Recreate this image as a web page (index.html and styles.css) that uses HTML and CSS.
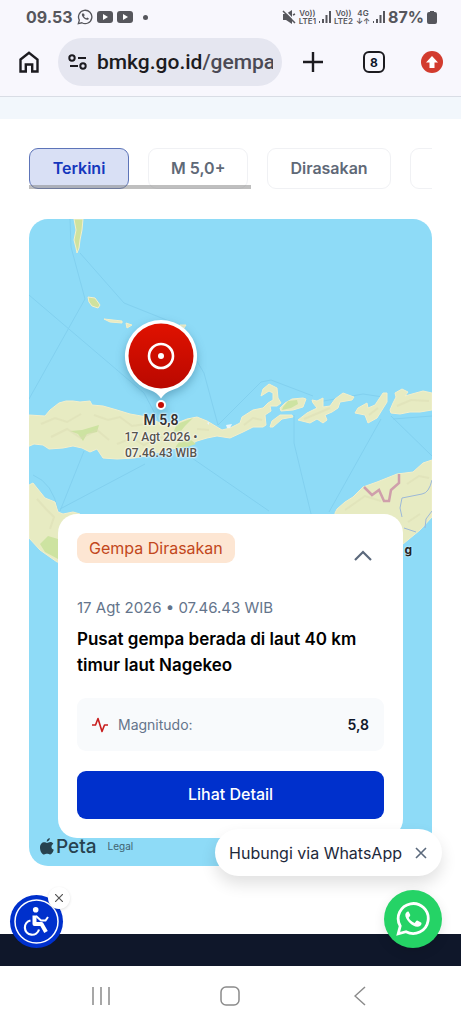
FILE: index.html
```html
<!DOCTYPE html>
<html lang="id">
<head>
  <meta charset="UTF-8">
  <title>Gempa Bumi Terkini</title>
  <meta name="viewport" content="width=device-width, initial-scale=1">
  <link rel="stylesheet" href="styles.css">
</head>
<body>
  <!-- Bilah status -->
  <div class="status-bar">
    <span class="clock">09.53</span>
    <svg class="icon-chat" width="16" height="16" viewBox="0 0 24 24" fill="none" stroke="#56565c" stroke-width="2">
      <path d="M2 22l1.500-5.300A10 10 0 1 1 7.300 20.600z"/>
      <path d="M8.500 6.500c-2 1-1.500 3.500.5 6s5 4.500 7.500 3.500c1.500-.8 1.300-2 .8-2.300l-2-1-1.300 1.300c-1.500-.5-2.800-1.800-3.500-3.200l1-1.300-.9-2.200z" fill="#56565c" stroke="none"/>
    </svg>
    <svg width="16" height="12" viewBox="0 0 16 12"><rect width="16" height="12" rx="3" fill="#56565c"/><path d="M6 3l5 3-5 3z" fill="#fff"/></svg>
    <svg width="16" height="12" viewBox="0 0 16 12"><rect width="16" height="12" rx="3" fill="#56565c"/><path d="M6 3l5 3-5 3z" fill="#fff"/></svg>
    <span class="dot"></span>
    <div class="status-right">
      <svg width="14" height="14" viewBox="0 0 14 14"><path d="M1 4h3L10 0v14L4 10H1z" fill="#56565c"/><path d="M2 0l12 12" stroke="#f8f7fd" stroke-width="1.500"/><path d="M1 1l12 12M11 5l2-1" stroke="#56565c" stroke-width="1.500"/></svg>
      <span class="net">Vo))<br>LTE1</span>
      <svg width="12" height="12" viewBox="0 0 12 12" fill="#56565c"><path d="M0 10h1v2H0zM3 8h2v4H3zM6.500 4h2v8h-2zM10 0h2v12h-2z"/></svg>
      <span class="net">Vo))<br>LTE2</span>
      <span class="net">4G<br>↓↑</span>
      <svg width="12" height="12" viewBox="0 0 12 12" fill="#56565c"><path d="M0 10h1v2H0zM3 8h2v4H3zM6.500 4h2v8h-2zM10 0h2v12h-2z"/></svg>
      <span class="battery">87%</span>
      <svg width="10" height="13" viewBox="0 0 10 13" fill="#56565c"><path d="M3 0h4v1h1a2 2 0 0 1 2 2v8a2 2 0 0 1-2 2H2a2 2 0 0 1-2-2V3a2 2 0 0 1 2-2h1z"/></svg>
    </div>
  </div>

  <!-- Bilah peramban -->
  <header class="browser-bar">
    <button class="icon-btn" aria-label="Beranda">
      <svg width="20" height="22" viewBox="0 0 20 22" fill="none" stroke="#1c1b20" stroke-width="2.400"><path d="M1.500 8.500L10 1.800l8.500 6.700v12h-5.300v-7H6.800v7H1.500z"/></svg>
    </button>
    <button class="address">
      <svg width="20" height="16" viewBox="0 0 20 16" fill="none" stroke="#1c1b20" stroke-width="2"><circle cx="4" cy="4" r="2.700"/><path d="M10 4h8M2 12h8"/><circle cx="15" cy="12" r="2.700"/></svg>
      <span class="url">bmkg.go.id<span class="path">/gempa</span></span>
    </button>
    <button class="icon-btn plus" aria-label="Tab baru">
      <svg width="20" height="20" viewBox="0 0 20 20" stroke="#1c1b20" stroke-width="2.400"><path d="M10 0v20M0 10h20"/></svg>
    </button>
    <button class="tab-count">8</button>
    <button class="update" aria-label="Perbarui">
      <svg width="12" height="12" viewBox="0 0 12 12" fill="#fff"><path d="M6 0l6 6.500H8.500V12h-5V6.500H0z"/></svg>
    </button>
  </header>
  <div class="strip"></div>

  <main class="content">
    <div class="tabs">
      <button class="tab active">Terkini</button>
      <button class="tab">M 5,0+</button>
      <button class="tab">Dirasakan</button>
      <button class="tab" aria-label="Lainnya"></button>
    </div>

    <section class="map">
      <svg class="map-base" viewBox="0 0 403 647" preserveAspectRatio="xMinYMin slice">
        <rect width="403" height="647" fill="#8edbf7"/>
        <!-- Garis batas laut -->
        <g fill="none" stroke="#82d0ef" stroke-width="1">
          <path d="M41 0l1 28 14 52L0 180M51 34l44 50 50 20 30 50 14 52M0 76l115 98 16 30"/>
          <path d="M189 206l43-43 10-2 42 16M265 196v28l18 75M352 200l-52 93M362 197l41 40M364 200l39-3M31 292l24-60M31 290l85-45M160 237l80 55M4 256q20 8 25 36M289 183l45-8 20 3"/>
        </g>
        <g fill="#e7ebc2" stroke="#f3efcb" stroke-width="1" stroke-linejoin="round">
          <path d="M45 0h9l-1 11-2 10-1 8-2 5-1-5-2-8 2-10z" fill="#cfe29e"/>
          <path d="M59 78l7 1 5 7-2 3-6-2-3-4z" fill="#cfe29e"/>
          <path d="M75 100l18 2v2l-12-1zM97 104l6 2-5 3zM151 106h6l-2 3z"/>
          <path d="M0 196l16 1 5-6 9-7 7-2 7 0 7 1 10-1 2 4 11 1 14 4 13 4 17 3 13 6h17l10-4 10-2 10 4 10 6 5 3 8-2 10-5 2-6 11-7 10-2 5-5 5-3v-7l-4-2-8 5 2-7 6-5 8 4 1 10 3 5-4 3h-7l1 5-6 4 1 10-3 2h-10l-10 5-13 6-13-2-10 2-10 3-10 5-10 2-14 3-13 4-16 3-17 1-14-1-6-9-7 3-8-4-9-2-10 2-14 1-6-4-9-1-9 4z"/>
          <path d="M251 189l5-5 7-4 11-1 3 1-3 8-10 3-12 1zM241 208l2-6 8-6h12l1 2-11 2-9 8z"/>
          <path d="M269 201l9-7 10-5-4-5-1-3 5 1 6-3v9l7-1 5-7 8-6 11 4-2 3-12 2-2 6-6 4-7 3 2 5-4 3-6-4-7 4z"/>
          <path d="M326 194l3-5 9-5 1 5 7-3 8-12h4v9l-10 16-9 5-3-8z"/>
          <path d="M361 191l3-7 3-6-1-4 7-4 6 3-3 4 7-2 11-3 9 2v17l-12 2h-10l-10 2-9-1z"/>
          <path d="M306 294l2-4 8-7 8-5 10-10 14-5 20-8 16-2 10-9 9-3v57l-12 13-17 14-68 5z"/>
          <path d="M0 266l4-2 12 15 10 4 3 10 5 2 10-2 7 2v50l-23-2-17-12-11-12z"/>
        </g>
        <g fill="#cde3a1">
          <path d="M41 212l12-1 17-5-2 7-10 2-4 7-5-7zM148 205l16-6-8 8-4 5-8 2zM150 223l12-2 5 4-9 3-12 1zM254 188l5-6 9-1 1 4-7 4-9 2zM11 325l8-8 10 3v20l-13-7z"/>
        </g>
        <!-- Relief daratan -->
        <g fill="none" stroke="#d9dab2" stroke-width="2" opacity=".4">
          <path d="M12 205l14-6 12 4 14-8M22 218l16-8 14 9 16-8 12 10M65 196l14 5 12-3 12 9 14-2M88 225l15-6 12 7 14-8 12 2M168 210l12 1M215 206l9-7 9 2M275 200l12-5 14-6M368 187l14-6 18 1M340 196l9-7M316 291l20-14 16 5M378 265l12-8 10 2M379 303l12-8M8 280l9 10 8 8-4 12"/>
        </g>
        <path d="M335 268l8 8 7-5 5 11h5l2-11 8-7v-9" fill="none" stroke="#cf9fab" stroke-width="2.500"/>
        <path d="M403 261q-3 13-10 14l-20 4-2 10 2 9M403 292l-6 8-1 9M375 309l12 4" fill="none" stroke="#9db9d8" stroke-width="1"/>
        <path d="M178 204l2-1v3zM197 206l6-1-2 4h-3z" fill="#e9f6f8"/>
      </svg>

      <div class="pin">
        <svg class="pin-icon" width="88" height="104" viewBox="0 0 88 104">
          <defs>
            <linearGradient id="pinRed" x1="0" y1="0" x2="0" y2="1"><stop offset="0" stop-color="#e01200"/><stop offset="1" stop-color="#b90800"/></linearGradient>
          </defs>
          <path d="M44 8a36 36 0 0 1 10 70.600q-6 2-10 8-4-6-10-8A36 36 0 0 1 44 8z" fill="#fff"/>
          <circle cx="44" cy="44" r="32.500" fill="url(#pinRed)"/>
          <circle cx="44" cy="44" r="12" fill="none" stroke="#fff" stroke-width="2.600"/>
          <circle cx="44" cy="44" r="3" fill="#fff"/>
          <circle cx="44" cy="93" r="4" fill="#c40d04" stroke="#fff" stroke-width="2"/>
        </svg>
        <strong>M 5,8</strong>
        <span>17 Agt 2026 •</span>
        <span>07.46.43 WIB</span>
      </div>
      <span class="place">g</span>

      <article class="card">
        <div class="card-head">
          <span class="badge">Gempa Dirasakan</span>
          <button class="toggle" aria-label="Tutup rincian">
            <svg width="18" height="11" viewBox="0 0 18 11" fill="none" stroke="#5b697c" stroke-width="2.200"><path d="M1 10l8-8 8 8"/></svg>
          </button>
        </div>
        <p class="time">17 Agt 2026 • 07.46.43 WIB</p>
        <h2>Pusat gempa berada di laut 40 km timur laut Nagekeo</h2>
        <div class="magnitude">
          <svg width="16" height="16" viewBox="0 0 16 16" fill="none" stroke="#c81e1e" stroke-width="1.600" stroke-linejoin="round"><path d="M0 8h3.500L6 1.500l4 13L12.500 8H16"/></svg>
          <span>Magnitudo:</span>
          <strong>5,8</strong>
        </div>
        <button class="detail">Lihat Detail</button>
      </article>

      <div class="attribution">
        <svg width="14" height="17" viewBox="0 0 14 17" fill="#27424f"><path d="M9.800 0c.1 2-1.300 3.600-3.100 3.700C6.500 2 8 .3 9.800 0zM7 5c.9 0 1.800-.9 3.300-.9 1.300 0 2.300.6 3 1.600-2.700 1.700-2.200 5 .5 6.100-.8 2.300-2.100 4.700-3.700 4.700-1.200 0-1.600-.7-3-.7s-1.900.7-3 .7C2.100 16.500 0 13.100 0 9.700c0-3.400 2-5.400 4.200-5.400C5.400 4.300 6.300 5 7 5z"/></svg>
        <span class="brand">Peta</span>
        <a href="#legal">Legal</a>
      </div>
    </section>
  </main>

  <footer class="site-footer"></footer>

  <!-- Navigasi sistem -->
  <nav class="system-nav">
    <button aria-label="Aplikasi terbaru"><svg width="18" height="18" viewBox="0 0 18 18" stroke="#8b8b8b" stroke-width="1.500"><path d="M1 0v18M9 0v18M17 0v18"/></svg></button>
    <button aria-label="Layar utama"><svg width="20" height="20" viewBox="0 0 20 20" fill="none" stroke="#8b8b8b" stroke-width="1.500"><rect x="1" y="1" width="18" height="18" rx="5"/></svg></button>
    <button aria-label="Kembali"><svg width="12" height="20" viewBox="0 0 12 20" fill="none" stroke="#8b8b8b" stroke-width="1.500"><path d="M11 1L1 10l10 9"/></svg></button>
  </nav>

  <!-- Tombol mengambang -->
  <div class="accessibility">
    <button class="accessibility-btn" aria-label="Aksesibilitas">
      <svg width="53" height="53" viewBox="0 0 53 53" fill="none" stroke="#fff">
        <circle cx="26.500" cy="26.500" r="21.500" stroke-width="1.500"/>
        <circle cx="25.700" cy="14.800" r="2.800" fill="#fff" stroke="none"/>
        <path d="M24.500 20.500v8.500h7l4.500 8" stroke-width="4" stroke-linejoin="round"/>
        <path d="M26 21l5 4.500h4.500l2.500-3.500" stroke-width="2"/>
        <path d="M20.500 25.500a7.200 7.200 0 1 0 8.500 9" stroke-width="2.200"/>
      </svg>
    </button>
    <button class="accessibility-close" aria-label="Sembunyikan">
      <svg width="8" height="8" viewBox="0 0 8 8" stroke="#555" stroke-width="1.200"><path d="M0 0l8 8M8 0L0 8"/></svg>
    </button>
  </div>
  <div class="wa-bubble">
    <span>Hubungi via WhatsApp</span>
    <button aria-label="Tutup"><svg width="12" height="12" viewBox="0 0 12 12" stroke="#5b697c" stroke-width="1.600"><path d="M1 1l10 10M11 1L1 11"/></svg></button>
  </div>
  <a class="wa-btn" href="#whatsapp" aria-label="WhatsApp">
    <svg width="34" height="34" viewBox="0 0 34 34" fill="none" stroke="#fff" stroke-width="2.800">
      <path d="M2.200 31.800l2-7.800A15 15 0 1 1 10 29.700z"/>
      <path d="M12.500 9.500c-1-.5-3 .8-3.200 3.300-.3 4.500 7 12 12 12 2.500 0 4.200-1.600 4.200-3.200 0-.8-.1-1-.5-1.200l-3.700-1.800c-.5-.2-.8 0-1.100.4l-1.500 1.900c-2.800-1-4.900-2.900-6-5.200l1.300-1.800c.3-.4.3-.7.200-1.100z" fill="#fff" stroke="none"/>
    </svg>
  </a>
</body>
</html>
```
FILE: styles.css
```css
* {
  box-sizing: border-box;
}
body {
  position: relative;
  display: flex;
  flex-direction: column;
  min-height: 100vh;
  margin: 0;
  background: #fff;
  color: #0f172a;
  font-family: "Inter", sans-serif;
  overflow-x: hidden;
}
button {
  padding: 0;
  border: none;
  background: none;
  color: inherit;
  font: inherit;
}
svg {
  display: block;
  flex-shrink: 0;
}

/* Bilah status */
.status-bar {
  display: flex;
  align-items: center;
  gap: 4px;
  height: 34px;
  padding: 0 24px 0 26px;
  background: #f8f7fd;
  color: #56565c;
}
.clock, .battery {
  font-size: 16px;
  font-weight: 700;
}
.dot {
  width: 5px;
  height: 5px;
  margin-left: 6px;
  border-radius: 50%;
  background: #56565c;
}
.status-right {
  display: flex;
  align-items: center;
  gap: 3px;
  margin-left: auto;
}
.net {
  font-size: 8px;
  font-weight: 600;
  line-height: 8px;
  text-align: center;
}

/* Bilah peramban */
.browser-bar {
  display: flex;
  align-items: center;
  height: 63px;
  padding: 0 18px 6px 19px;
  border-bottom: 1px solid #d9dde5;
  background: #f8f7fd;
}
.address {
  display: flex;
  flex: 1;
  align-items: center;
  gap: 9px;
  min-width: 0;
  height: 48px;
  margin: 0 21px 0 19px;
  padding: 0 9px 0 10px;
  border-radius: 24px;
  background: #e5e6f0;
}
.url {
  overflow: hidden;
  color: #1c1b20;
  font-family: "Roboto", sans-serif;
  font-size: 21px;
  font-weight: 500;
  line-height: 28px;
  white-space: nowrap;
}
.path {
  color: #4b4a55;
}
.tab-count {
  width: 22px;
  height: 22px;
  margin: 0 36px 0 40px;
  border: 2px solid #1c1b20;
  border-radius: 6px;
  font-size: 12px;
  font-weight: 700;
}
.update {
  display: flex;
  align-items: center;
  justify-content: center;
  width: 22px;
  height: 22px;
  border-radius: 50%;
  background: #d23b2e;
}
.strip {
  height: 22px;
  background: #f2f7fc;
}

/* Isi halaman */
.content {
  flex: 1;
  padding: 29px 29px 67px;
}
.tabs {
  position: relative;
  display: flex;
  gap: 19px;
  margin-bottom: 30px;
  overflow: hidden;
}
/* Penanda gulir di bawah tab */
.tabs::after {
  content: "";
  position: absolute;
  bottom: 0;
  left: 0;
  width: 55%;
  height: 4px;
  background: rgba(128, 128, 128, 0.5);
}
.tab {
  flex-shrink: 0;
  min-width: 100px;
  height: 41px;
  padding: 0 22px 2px;
  border: 1px solid #f0f1f4;
  border-radius: 9px;
  color: #5f6977;
  font-size: 16px;
  font-weight: 600;
}
.tab.active {
  border-color: #5d74b8;
  background: #d9e0f5;
  color: #1437bd;
}

/* Peta */
.map {
  position: relative;
  padding: 295px 29px 0;
  border-radius: 19px;
  overflow: hidden;
}
.map-base {
  position: absolute;
  top: 0;
  left: 0;
  width: 100%;
  height: 100%;
}
.pin {
  position: absolute;
  top: 93px;
  left: 88px;
  display: flex;
  flex-direction: column;
  align-items: center;
  width: 88px;
  color: #55534d;
  font-family: "Roboto", sans-serif;
  font-size: 12px;
  font-weight: 500;
  line-height: 16px;
  white-space: nowrap;
  text-shadow: 0 0 2px #fff, 0 0 2px #fff, 0 0 3px #fff;
}
.pin-icon {
  margin-bottom: -5px;
  filter: drop-shadow(0 4px 5px rgba(0, 60, 90, 0.3));
}
.pin strong {
  color: #333;
  font-size: 14px;
  font-weight: 600;
  line-height: 18px;
}
.place {
  position: absolute;
  top: 323px;
  right: 20px;
  color: #222;
  font-size: 12px;
  font-weight: 700;
  text-shadow: 0 0 2px #fff;
}
.card {
  position: relative;
  padding: 19px;
  border-radius: 19px;
  background: #fff;
}
.card-head {
  display: flex;
  justify-content: space-between;
  height: 44px;
  margin-bottom: 19px;
}
.badge {
  height: 30px;
  padding: 0 12px;
  border-radius: 9px;
  background: #fde6d3;
  color: #c2471c;
  font-size: 16px;
  line-height: 30px;
}
.toggle {
  padding: 0 12px;
}
.time {
  margin: 0 0 6px;
  color: #64748b;
  font-size: 15px;
  line-height: 24px;
}
h2 {
  margin: 0 0 20px;
  color: #000;
  font-size: 17px;
  font-weight: 600;
  line-height: 26px;
}
.magnitude {
  display: flex;
  align-items: center;
  gap: 10px;
  height: 53px;
  margin-bottom: 20px;
  padding: 0 15px;
  border-radius: 9px;
  background: #f8fafc;
  color: #64748b;
  font-size: 14px;
}
.magnitude strong {
  margin-left: auto;
  color: #0f172a;
  font-weight: 600;
}
.detail {
  display: block;
  width: 100%;
  height: 48px;
  padding-bottom: 2px;
  border-radius: 9px;
  background: #0030cc;
  color: #fff;
  font-size: 16px;
  font-weight: 500;
}
.attribution {
  position: relative;
  display: flex;
  align-items: center;
  height: 28px;
  margin-left: -18px;
  padding-bottom: 12px;
  color: #27424f;
}
.brand {
  margin: 0 11px 0 2px;
  font-size: 19px;
  font-weight: 500;
}
.attribution a {
  color: #3f626f;
  font-size: 10px;
  text-decoration: none;
}

.site-footer {
  height: 32px;
  background: #0f172a;
}
.system-nav {
  display: flex;
  align-items: center;
  justify-content: center;
  height: 58px;
  padding-top: 2px;
  background: #fff;
}
.system-nav button {
  display: flex;
  justify-content: center;
  width: 28%;
}

/* Tombol mengambang */
.accessibility {
  position: absolute;
  bottom: 76px;
  left: 10px;
}
.accessibility-btn {
  display: block;
  width: 53px;
  height: 53px;
  border-radius: 50%;
  background: #0030cc;
}
.accessibility-close {
  position: absolute;
  top: -8px;
  right: -7px;
  display: flex;
  align-items: center;
  justify-content: center;
  width: 22px;
  height: 22px;
  border-radius: 50%;
  background: #fff;
  box-shadow: 0 1px 3px rgba(0, 0, 0, 0.12);
}
.wa-bubble {
  position: absolute;
  right: 19px;
  bottom: 148px;
  display: flex;
  align-items: center;
  gap: 13px;
  height: 47px;
  padding: 0 15px 0 14px;
  border-radius: 24px;
  background: #fff;
  box-shadow: 0 8px 16px rgba(0, 0, 0, 0.12);
  color: #1e293b;
  font-size: 16px;
  white-space: nowrap;
}
.wa-btn {
  position: absolute;
  right: 19px;
  bottom: 76px;
  display: flex;
  align-items: center;
  justify-content: center;
  width: 58px;
  height: 58px;
  border-radius: 50%;
  background: #25d366;
  box-shadow: 0 4px 12px rgba(0, 0, 0, 0.1);
}
```
